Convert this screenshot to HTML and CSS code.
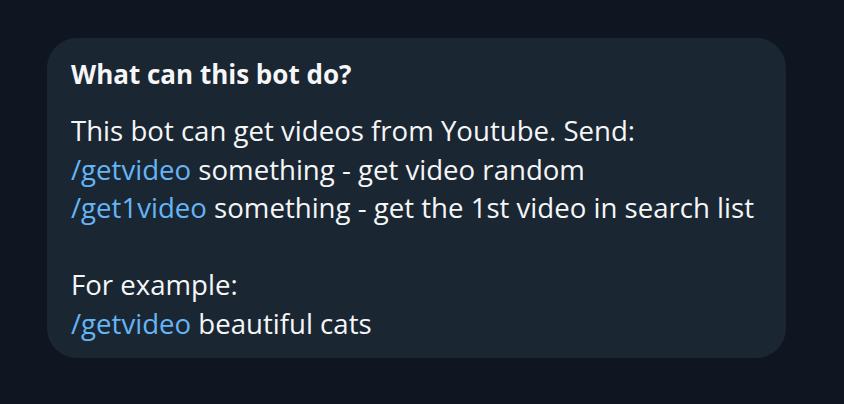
FILE: index.html
```html
<!DOCTYPE html>
<html>
<head>
<meta charset="utf-8">
<link rel="stylesheet" href="styles.css">
</head>
<body>
<div class="page">
  <div class="card">
    <div class="title">What can this bot do?</div>
    <div class="body">
      <p>This bot can get videos from Youtube. Send:<br><span class="cmd">/getvideo</span> something - get video random<br><span class="cmd">/get1video</span> something - get the 1st video in search list</p>
      <p>For example:<br><span class="cmd">/getvideo</span> beautiful cats</p>
    </div>
  </div>
</div>
</body>
</html>
```
FILE: styles.css
```css
html, body {
  margin: 0;
  padding: 0;
  background: #0f1621;
  width: 844px;
  height: 404px;
  overflow: hidden;
}
.page {
  padding: 38px 58px 0 47px;
  font-family: "Open Sans", sans-serif;
  color: #f5f6f7;
}
.card {
  width: 739px;
  height: 320px;
  box-sizing: border-box;
  background: #1b2633;
  border-radius: 30px;
  padding: 19px 24px 0 24px;
}
.title {
  font-weight: 700;
  font-size: 26px;
  line-height: 34px;
}
.body {
  margin-top: 20px;
  font-size: 27.6px;
  line-height: 38.6px;
}
.body p {
  margin: 0 0 38.6px 0;
}
.cmd {
  color: #64b5f6;
}
```
